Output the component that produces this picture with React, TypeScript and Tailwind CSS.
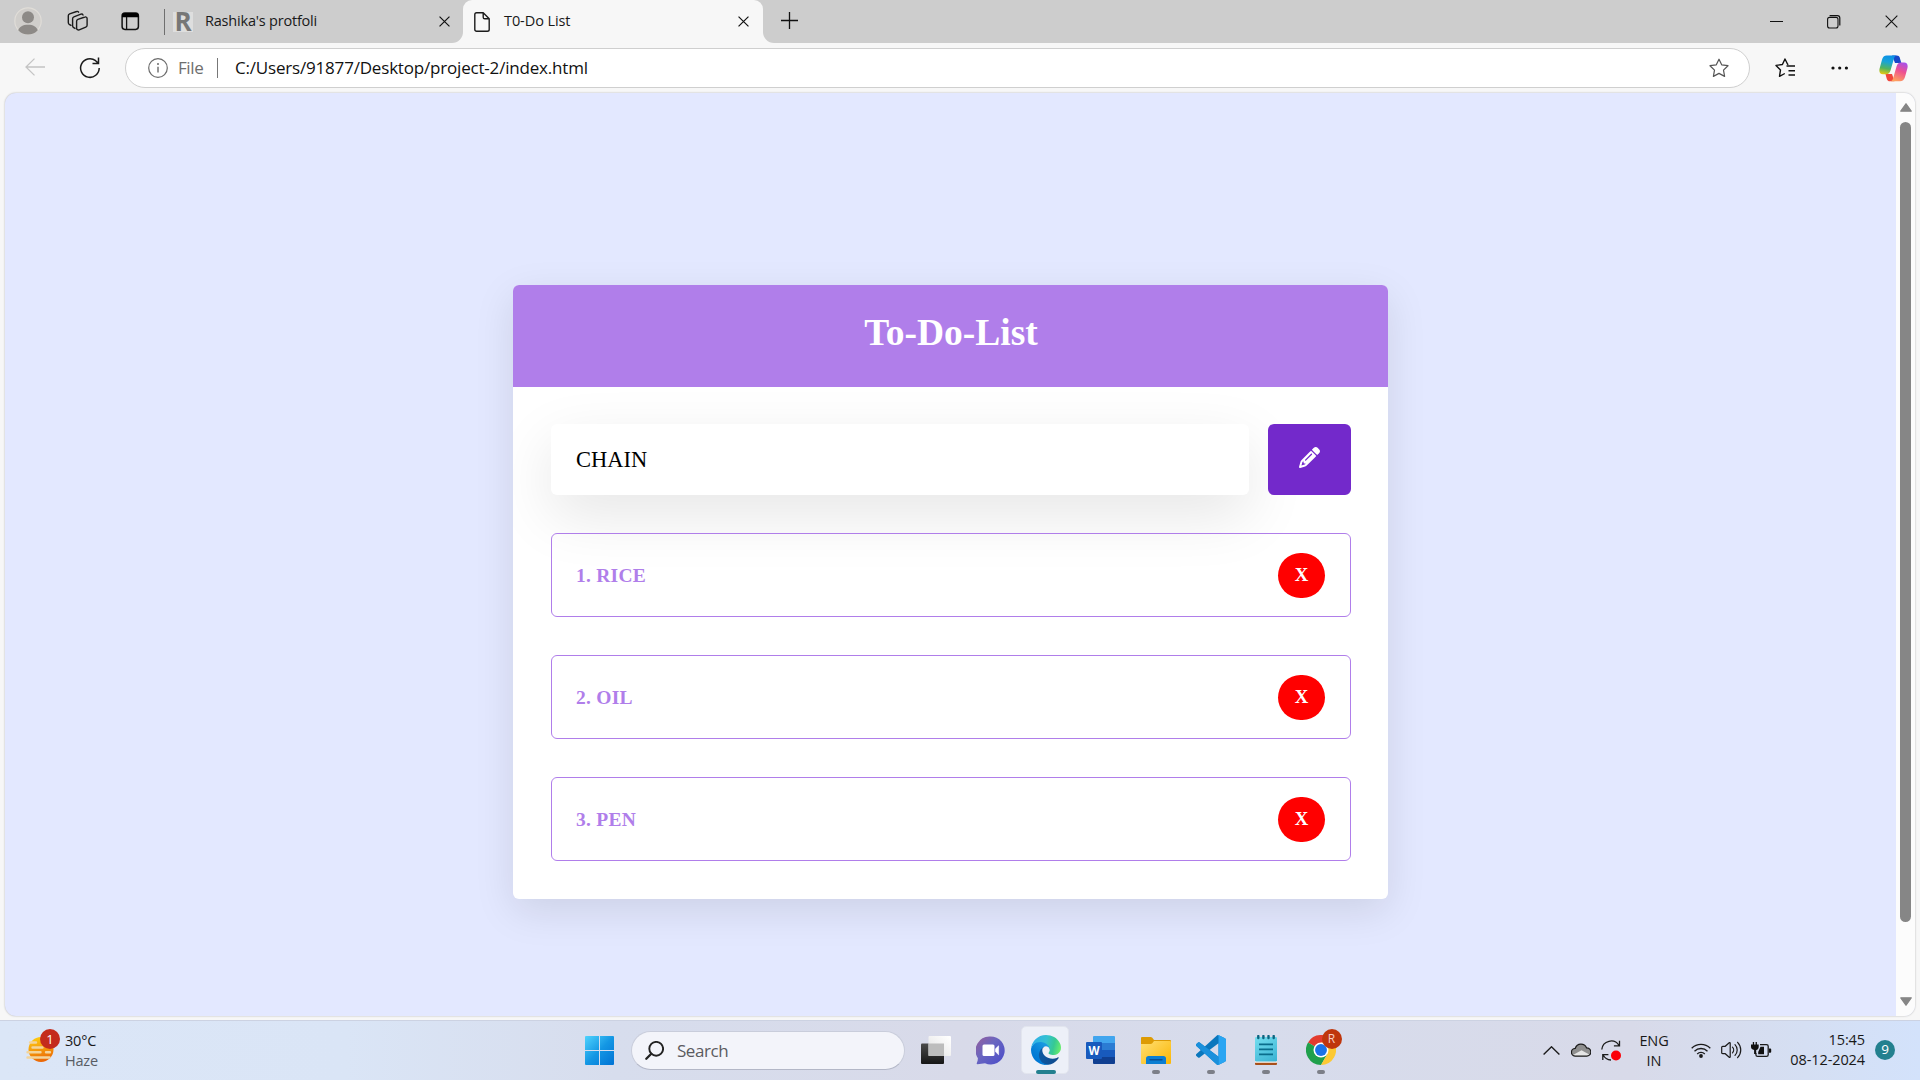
import type { ReactNode } from "react";
import { FaPencil } from "react-icons/fa6";

const UI = "font-['Open_Sans','Noto_Sans',sans-serif]";

function Svg({ w, h, vb, className = "", children }: { w: number; h: number; vb?: string; className?: string; children: ReactNode }) {
  return (
    <svg width={w} height={h} viewBox={vb ?? `0 0 ${w} ${h}`} fill="none" className={`block shrink-0 ${className}`}>
      {children}
    </svg>
  );
}

function Cross({ size, className = "", sw = 1.3 }: { size: number; className?: string; sw?: number }) {
  return (
    <Svg w={size} h={size} vb="0 0 12 12" className={className}>
      <path d="M.6.6 11.4 11.4M11.4.6.6 11.4" stroke="#111" strokeWidth={sw} />
    </Svg>
  );
}

function TabStrip() {
  return (
    <div className="relative flex h-[43px] shrink-0 items-start bg-[#cdcdcd]">
      <Svg w={28} h={28} className="ml-[14px] mt-[7px]">
        <circle cx="14" cy="14" r="13.2" fill="#d0cecb" stroke="#e0ddd8" strokeWidth="1.2" />
        <circle cx="14" cy="10.2" r="6" fill="#8d8a87" />
        <path d="M4.2 23.3c1.2-3.6 4.600-5.600 9.800-5.600s8.600 2 9.800 5.600A13.200 13.200 0 0 1 14 27.600a13.200 13.200 0 0 1-9.800-4.300z" fill="#8d8a87" />
      </Svg>
      <Svg w={22} h={22} className="ml-[25px] mt-[10px]">
        <g stroke="#1b1b1b" strokeWidth="1.4" strokeLinejoin="round" strokeLinecap="round">
          <path d="M9.600 11.200c0-.9.500-1.600 1.300-1.900l7-2.300c1.100-.4 2.200.4 2.200 1.600v6.600c0 .9-.5 1.600-1.300 1.900l-6.600 2.800c-1.200.4-2.600-.4-2.600-1.700z" />
          <path d="M8 18.400 6.700 17.600c-.7-.4-1.100-1-1.100-1.900V8.800c0-.9.500-1.600 1.300-1.900l7-2.700c.8-.3 1.700 0 2.100.8" />
          <path d="M4 15.400 2.200 14.300c-.6-.4-.9-1-.9-1.700V5.800c0-.9.500-1.600 1.300-1.900l7-2.400c.8-.3 1.600 0 2 .7" />
        </g>
      </Svg>
      <Svg w={19} h={19} className="ml-[32px] mt-[12px]">
        <rect x="1.100" y="1.100" width="16.300" height="16.300" rx="2.800" stroke="#111" strokeWidth="1.500" />
        <path d="M1 5.200V3.600A2.800 2.800 0 0 1 3.800 1h11a2.800 2.800 0 0 1 2.800 2.600v1.600z" fill="#000" />
        <path d="M5.600 5v12.500" stroke="#111" strokeWidth="1.300" />
      </Svg>
      <div className="ml-[24px] mt-[9px] h-[26px] w-[1px] bg-[#6f6f6f]" />
      <div className={`ml-[8px] mt-[12px] flex h-5 w-5 items-center justify-center bg-[#dedede] pb-[2px] text-[26px] font-bold leading-none text-[#777] ${UI}`}>R</div>
      <div className={`ml-[12px] mt-[11px] w-[234px] whitespace-nowrap text-[14.500px] leading-5 tracking-[-0.2px] text-[#191919] ${UI}`}>
        Rashika's protfoli
      </div>
      <Cross size={11} className="mt-[16px]" />
      <div className="relative ml-[13px] flex h-[43px] w-[300px] items-start rounded-t-[9px] bg-[#f7f7f7]">
        <Svg w={11} h={11} className="absolute -left-[11px] bottom-0">
          <path d="M11 0A11 11 0 0 1 0 11h11z" fill="#f7f7f7" />
        </Svg>
        <Svg w={11} h={11} className="absolute -right-[11px] bottom-0">
          <path d="M0 0a11 11 0 0 0 11 11H0z" fill="#f7f7f7" />
        </Svg>
        <Svg w={16} h={20} className="ml-[11px] mt-[12px]">
          <path d="M.8 2.600C.8 1.500 1.600.800 2.600.800h6.600l6 6v10.600c0 1-.8 1.800-1.800 1.800H2.600c-1 0-1.800-.8-1.800-1.800zM9.200.800v4.400c0 .9.700 1.600 1.600 1.600h4.400" stroke="#1b1b1b" strokeWidth="1.400" strokeLinejoin="round" />
        </Svg>
        <div className={`ml-[14px] mt-[11px] w-[234px] whitespace-nowrap text-[14.500px] leading-5 tracking-[-0.08px] text-[#191919] ${UI}`}>T0-Do List</div>
        <Cross size={11} className="mt-[16px]" />
      </div>
      <Svg w={18} h={18} className="ml-[18px] mt-[12px]">
        <path d="M8.500 0v17M0 8.500h17" stroke="#111" strokeWidth="1.300" />
      </Svg>
      <div className="ml-auto flex pr-[22px]">
        <Svg w={13} h={13} className="mt-[15px]">
          <path d="M0 6.500h13" stroke="#111" />
        </Svg>
        <Svg w={14} h={14} className="ml-[44px] mt-[15px]">
          <rect x=".6" y="2.400" width="10.400" height="10.600" rx="2" stroke="#111" strokeWidth="1.100" />
          <path d="M2.600.600h7.800c1.500 0 2.400 1 2.400 2.400v7.600" stroke="#111" strokeWidth="1.200" />
        </Svg>
        <Cross size={13} className="ml-[44px] mt-[15px]" sw={1} />
      </div>
    </div>
  );
}

const STAR = "M10 1.200 12.700 6.800 19 7.700 14.500 12.100 15.600 18.400 10 15.400 4.400 18.400 5.500 12.100 1 7.700 7.300 6.800z";

function Copilot() {
  return (
    <Svg w={29} h={27}>
      <defs>
        <linearGradient id="cpa" x1="10" y1="0" x2="6" y2="20" gradientUnits="userSpaceOnUse">
          <stop stopColor="#0a8ee8" /><stop offset=".35" stopColor="#18a4d8" /><stop offset=".68" stopColor="#52b45e" /><stop offset="1" stopColor="#f3cb0c" />
        </linearGradient>
        <linearGradient id="cpb" x1="24" y1="7" x2="16" y2="26" gradientUnits="userSpaceOnUse">
          <stop stopColor="#a550ec" /><stop offset=".45" stopColor="#ee5091" /><stop offset="1" stopColor="#ffa45c" />
        </linearGradient>
      </defs>
      <path d="M13 .5h4.800c1.500 0 2.500.8 3 2.200L22.300 8H16z" fill="#1748c8" />
      <path d="M15.500 26.200H11c-1.600 0-2.700-.9-3.200-2.300L6.500 19H13z" fill="#f0463c" />
      <path d="M7.700.500h9.600c-1.300.6-2 1.700-2.500 3.500l-3.300 11.400c-.7 2.300-2 3.800-4.500 3.800H4C.8 19.200-.2 16.800.6 13.500L3 4.800C3.700 2 5.300.500 7.700.500z" fill="url(#cpa)" />
      <path d="M21 26.200h-9.200c1.300-.6 2-1.700 2.500-3.500l3.300-11.400c.7-2.300 2-3.800 4.500-3.800H25c3.200 0 4.200 2.400 3.400 5.700L26 21.900c-.7 2.800-2.600 4.300-5 4.300z" fill="url(#cpb)" />
      <path d="M15.200 8.300h2.900c-.7.800-1 1.700-1.300 2.800L14.700 17.300c-.4 1.100-1 1.700-1.900 1.800H11c1-.9 1.500-2.200 1.900-3.700z" fill="#f7f7f7" />
    </Svg>
  );
}

function Toolbar() {
  return (
    <div className="flex h-[50px] shrink-0 items-center bg-[#f7f7f7]">
      <Svg w={20} h={18} className="ml-[25px] mt-[-2px]">
        <path d="M20 9H1M9.500.600 1 9l8.500 8.400" stroke="#c4c4c4" strokeWidth="1.300" />
      </Svg>
      <Svg w={22} h={22} className="ml-[34px]">
        <path d="M20.200 11A9.300 9.300 0 1 1 16.600 3.700L19.500 6.400M19.500.600v6h-6" stroke="#1b1b1b" strokeWidth="1.500" />
      </Svg>
      <div className="ml-[24px] flex h-10 w-[1625px] items-center rounded-full border border-[#cfcfcf] bg-white">
        <Svg w={20} h={20} className="ml-[22px]">
          <circle cx="10" cy="10" r="9.300" stroke="#6b6b6b" strokeWidth="1.200" />
          <path d="M10 8.800v5.600" stroke="#6b6b6b" strokeWidth="1.400" />
          <circle cx="10" cy="6" r="1" fill="#6b6b6b" />
        </Svg>
        <span className={`ml-[10px] w-[38px] text-[17px] leading-6 tracking-[-0.4px] text-[#6e6e6e] ${UI}`}>File</span>
        <span className="ml-[1px] h-5 w-[1px] bg-[#777]" />
        <span className={`ml-[17px] whitespace-nowrap text-[17px] leading-6 tracking-[-0.19px] text-[#111] ${UI}`}>C:/Users/91877/Desktop/project-2/index.html</span>
        <Svg w={20} h={20} className="ml-auto mr-[20px]">
          <path d={STAR} stroke="#555" strokeWidth="1.200" strokeLinejoin="round" />
        </Svg>
      </div>
      <Svg w={22} h={20} className="ml-[25px]">
        <path d="M11.500 8h8.500M13.500 12.800h6.500M13.500 17h6.500" stroke="#111" strokeWidth="1.500" />
        <path d="M13.400 6.400 12.600 6.300 10 1 7.400 6.500 1 7.400 5.500 11.900 4.500 18.300 9.800 15.500" stroke="#111" strokeWidth="1.400" strokeLinejoin="round" />
      </Svg>
      <Svg w={18} h={4} className="ml-[34px]">
        <circle cx="2" cy="2" r="1.600" fill="#111" /><circle cx="8.700" cy="2" r="1.600" fill="#111" /><circle cx="15.400" cy="2" r="1.600" fill="#111" />
      </Svg>
      <div className="ml-[30px]"><Copilot /></div>
    </div>
  );
}

function TodoItem({ label }: { label: string }) {
  return (
    <li className="flex h-[84px] items-center justify-between rounded-[6px] border border-[#b07eea] pl-[24px] pr-[25px]">
      <span className="pt-[2px] text-[19.5px] font-bold leading-6 tracking-[0.25px] text-[#b07eea]">{label}</span>
      <button className="h-[45px] w-[47px] rounded-full bg-[#ff0000] text-[18.75px] font-bold leading-none text-white">X</button>
    </li>
  );
}

function TodoCard() {
  return (
    <section className="h-[614px] w-[875px] overflow-hidden rounded-[6px] bg-white font-['Liberation_Serif','Times_New_Roman',serif] shadow-[0_12px_40px_rgba(0,0,0,0.1)]">
      <h1 className="relative h-[102px] bg-[#b07eea] pt-[27px] pl-[1px] text-center text-[37.5px] font-bold leading-[42px] text-white">To-Do-List</h1>
      <div className="pl-[38px] pr-[37px] pt-[37px]">
        <div className="flex gap-[19px]">
          <div className="flex h-[71px] w-[698px] items-center rounded-[6px] bg-white pl-[25px] text-[22.5px] leading-7 text-black shadow-[0_20px_60px_rgba(0,0,0,0.1)]">CHAIN</div>
          <button className="relative flex h-[71px] w-[83px] items-center justify-center rounded-[6px] bg-[#7329cb] pb-[4px] text-white">
            <FaPencil size={21} />
          </button>
        </div>
        <ul className="relative mt-[38px] flex flex-col gap-[38px]">
          {["1. RICE", "2. OIL", "3. PEN"].map((t) => <TodoItem key={t} label={t} />)}
        </ul>
      </div>
    </section>
  );
}

function Page() {
  return (
    <div className="h-[927px] shrink-0 bg-[#f7f7f7] pl-[5px] pr-[5px]">
      <div className="flex h-[923px] overflow-hidden rounded-[11px] bg-[#e3e8ff] shadow-[0_0_2px_rgba(0,0,0,0.3)]">
        <main className="flex flex-1 justify-center pt-[192px]"><TodoCard /></main>
        <div className="flex w-[19px] flex-col items-center bg-[#fcfcfc] pt-[10px]">
          <Svg w={12} h={9}><path d="M6 .8 11.200 8.200H.8z" fill="#868686" stroke="#868686" strokeWidth="1.300" strokeLinejoin="round" /></Svg>
          <div className="mt-[10px] h-[800px] w-[11px] rounded-full bg-[#868686]" />
          <Svg w={12} h={9} className="mt-[75px]"><path d="M6 8.200 11.200.800H.8z" fill="#868686" stroke="#868686" strokeWidth="1.300" strokeLinejoin="round" /></Svg>
        </div>
      </div>
    </div>
  );
}

function Weather() {
  return (
    <div className="relative ml-[26px] mt-[9px] h-[34px] w-[34px]">
      <Svg w={29} h={27} className="mt-[7px]">
        <defs><linearGradient id="sun" x1="12" y1="0" x2="18" y2="26" gradientUnits="userSpaceOnUse"><stop stopColor="#ffcf10" /><stop offset="1" stopColor="#ea6205" /></linearGradient></defs>
        <circle cx="15" cy="13.500" r="12.500" fill="url(#sun)" />
        <path d="M4 6.500h6M6.500 11.500h10M1.500 16.200h13M20 16.200h4M1.500 21.500h22" stroke="#f3d49a" strokeWidth="2.400" strokeLinecap="round" />
      </Svg>
      <span className={`absolute left-[14px] top-0 flex h-5 w-5 items-center justify-center rounded-full bg-[#c42b1c] text-[13px] leading-none text-white ${UI}`}>1</span>
    </div>
  );
}

function Slot({ running = false, active = false, children }: { running?: boolean; active?: boolean; children: ReactNode }) {
  return (
    <div className="relative flex h-[60px] w-[55px] shrink-0 items-center justify-center">
      {active && <span className="absolute left-[3px] top-[6px] h-[48px] w-[48px] rounded-[5px] border border-[#e2e5ee] bg-[#edf0f8]" />}
      <div className="relative">{children}</div>
      {running && <span className="absolute bottom-[6px] h-[4px] w-[8px] rounded-full bg-[#7c7f88]" />}
      {active && <span className="absolute bottom-[6px] h-[4px] w-[20px] rounded-full bg-[#23808f]" />}
    </div>
  );
}

function StartIcon() {
  return (
    <Svg w={29} h={29}>
      <defs><linearGradient id="win" x1="0" y1="0" x2="29" y2="29" gradientUnits="userSpaceOnUse"><stop stopColor="#4fd3fd" /><stop offset=".5" stopColor="#1497e4" /><stop offset="1" stopColor="#0072d4" /></linearGradient></defs>
      <path d="M1 0h13v14H0V1a1 1 0 0 1 1-1zM15 0h13a1 1 0 0 1 1 1v13H15zM0 15h14v14H1a1 1 0 0 1-1-1zM15 15h14v13a1 1 0 0 1-1 1H15z" fill="url(#win)" />
    </Svg>
  );
}

function TaskViewIcon() {
  return (
    <Svg w={30} h={28}>
      <defs>
        <linearGradient id="tva" x1="0" y1="8" x2="0" y2="28" gradientUnits="userSpaceOnUse"><stop stopColor="#494949" /><stop offset="1" stopColor="#161616" /></linearGradient>
        <linearGradient id="tvb" x1="28" y1="0" x2="10" y2="20" gradientUnits="userSpaceOnUse"><stop stopColor="#fff" /><stop offset="1" stopColor="#e4e4e4" /></linearGradient>
      </defs>
      <rect x="0" y="7.500" width="23" height="20.500" rx="1" fill="url(#tva)" />
      <rect x="7.500" y="0" width="22.500" height="20" rx="1" fill="url(#tvb)" />
      <path d="M7.500 7.500H23V20H7.500z" fill="#bdbdbd" />
    </Svg>
  );
}

function ChatIcon() {
  return (
    <Svg w={29} h={29}>
      <defs><linearGradient id="cht" x1="3" y1="3" x2="26" y2="25" gradientUnits="userSpaceOnUse"><stop stopColor="#8c60a4" /><stop offset=".4" stopColor="#6a66c0" /><stop offset="1" stopColor="#4f50c8" /></linearGradient></defs>
      <path d="M14.500.500A14 14 0 1 1 9 27.300C6.500 27.600 4 28 1.500 28.200c-.8 0-1-.6-.7-1.200.7-1.500 1.100-3 1.100-4.800A14 14 0 0 1 14.500.500z" fill="url(#cht)" />
      <rect x="6.500" y="8.500" width="12" height="11.500" rx="1.500" fill="#fff" />
      <path d="M19.500 12.800 22.600 9.800v9L19.500 15.800z" fill="#fff" stroke="#fff" strokeWidth=".6" />
    </Svg>
  );
}

function EdgeIcon() {
  return (
    <Svg w={30} h={30} vb="0 0 256 256">
      <defs>
        <linearGradient id="ea" x1="63" y1="177" x2="241" y2="177" gradientUnits="userSpaceOnUse"><stop stopColor="#0c59a4" /><stop offset="1" stopColor="#114a8b" /></linearGradient>
        <linearGradient id="eb" x1="157" y1="99" x2="46" y2="220" gradientUnits="userSpaceOnUse"><stop stopColor="#1b9de2" /><stop offset=".16" stopColor="#1595df" /><stop offset=".67" stopColor="#0680d7" /><stop offset="1" stopColor="#0078d4" /></linearGradient>
        <linearGradient id="ec" x1="20" y1="60" x2="255" y2="120" gradientUnits="userSpaceOnUse"><stop stopColor="#2fb0e8" /><stop offset=".45" stopColor="#35c1d2" /><stop offset=".75" stopColor="#36c993" /><stop offset="1" stopColor="#66eb6e" /></linearGradient>
      </defs>
      <g transform="translate(-4.630 -4.920)">
        <path fill="url(#ea)" d="M235.680 195.460a93.730 93.730 0 0 1-10.540 4.710 101.870 101.870 0 0 1-35.900 6.460c-47.320 0-88.540-32.550-88.540-74.320A31.480 31.480 0 0 1 117.130 105c-42.800 1.800-53.800 46.400-53.800 72.530 0 73.880 68.090 81.370 82.760 81.370 7.910 0 19.840-2.300 27-4.560l1.310-.44a128.340 128.340 0 0 0 66.600-52.800 4 4 0 0 0-5.320-5.640z" />
        <path fill="url(#eb)" d="M110.340 246.340A79.200 79.200 0 0 1 87.600 225a80.720 80.720 0 0 1 29.530-120c3.120-1.470 8.450-4.130 15.540-4a32.350 32.350 0 0 1 25.690 13 31.880 31.880 0 0 1 6.360 18.660c0-.21 24.460-79.600-80-79.600-43.900 0-80 41.660-80 78.210a130.150 130.150 0 0 0 12.110 56 128 128 0 0 0 156.380 67.110 75.550 75.550 0 0 1-62.780-8z" />
        <path fill="url(#ec)" d="M156.940 153.780c-.81 1.050-3.300 2.500-3.300 5.660 0 2.610 1.700 5.120 4.720 7.230 14.380 10 41.490 8.680 41.560 8.680a59.560 59.560 0 0 0 30.270-8.350 61.380 61.380 0 0 0 30.430-52.880c.26-22.410-8-37.310-11.340-43.910C228.090 28.760 182.350 4.920 132.610 4.920a128 128 0 0 0-128 126.200c.48-36.540 36.800-66.050 80-66.050 3.500 0 23.460.34 42 10.070 16.340 8.580 24.900 18.940 30.850 29.210 6.180 10.670 7.280 24.150 7.280 29.520s-2.740 13.330-7.800 19.910z" />
      </g>
    </Svg>
  );
}

function WordIcon() {
  return (
    <div className="relative">
      <Svg w={29} h={28}>
        <path d="M8 0h20a1 1 0 0 1 1 1v6H7V1a1 1 0 0 1 1-1z" fill="#41a5ee" />
        <path d="M7 7h22v7H7z" fill="#2b7cd3" />
        <path d="M7 14h22v7H7z" fill="#185abd" />
        <path d="M7 21h22v6a1 1 0 0 1-1 1H8a1 1 0 0 1-1-1z" fill="#103f91" />
      </Svg>
      <span className={`absolute left-0 top-[6px] flex h-[17px] w-[16px] items-center justify-center rounded-[1px] bg-[#185abd] text-[11.5px] font-bold leading-none text-white ${UI}`}>W</span>
    </div>
  );
}

function FolderIcon() {
  return (
    <Svg w={30} h={27}>
      <defs><linearGradient id="fld" x1="6" y1="3" x2="26" y2="27" gradientUnits="userSpaceOnUse"><stop stopColor="#ffdc6a" /><stop offset="1" stopColor="#fbb90c" /></linearGradient></defs>
      <path d="M1 0h8.500c.8 0 1.300.3 1.800.8L13 3h16a1 1 0 0 1 1 1v4H0V1a1 1 0 0 1 1-1z" fill="#dd9b04" />
      <path d="M0 7h9.500c.8 0 1.300-.3 1.800-.8L13 4h16a1 1 0 0 1 1 1v21a1 1 0 0 1-1 1H1a1 1 0 0 1-1-1z" fill="url(#fld)" />
      <path d="M5 27v-5.500C5 20 6 19 7.500 19h15c1.500 0 2.500 1 2.500 2.500V27z" fill="#0b7ed2" />
      <path d="M9 22.800h12" stroke="#0a4f94" strokeWidth="1.400" strokeLinecap="round" />
    </Svg>
  );
}

function CodeIcon() {
  return (
    <Svg w={30} h={30} vb="0 0 24 24">
      <path fill="#0a77bd" d="M23.150 2.587L18.210.210a1.494 1.494 0 0 0-1.705.290l-9.460 8.630-4.120-3.128a.999.999 0 0 0-1.276.057L.327 7.261A1 1 0 0 0 .326 8.740L3.899 12 .326 15.260a1 1 0 0 0 .001 1.479L1.650 17.940a.999.999 0 0 0 1.276.057l4.120-3.128 9.460 8.630a1.492 1.492 0 0 0 1.704.290l4.942-2.377A1.500 1.500 0 0 0 24 20.060V3.939a1.500 1.500 0 0 0-.850-1.352zm-5.146 14.861L10.826 12l7.178-5.448v10.896z" />
      <path fill="#1a90dc" d="M.327 7.261 1.649 6.059a1 1 0 0 1 1.276-.057L18 17.450v6.400a1.500 1.500 0 0 1-1.500-.350L.326 8.740a1 1 0 0 1 0-1.479z" />
      <path fill="#2aa5f2" d="M18.210.210 23.150 2.587A1.500 1.500 0 0 1 24 3.939V20.060a1.500 1.500 0 0 1-.848 1.352L18.210 23.789a1.500 1.500 0 0 1-.8.150c.4-.2.600-.5.600-1V1.100c0-.5-.2-.8-.6-1 .3-.1.500 0 .8.110z" />
    </Svg>
  );
}

function NotepadIcon() {
  return (
    <Svg w={22} h={30}>
      <defs><linearGradient id="ntp" x1="3" y1="2" x2="18" y2="27" gradientUnits="userSpaceOnUse"><stop stopColor="#72dcee" /><stop offset="1" stopColor="#3cb4d4" /></linearGradient></defs>
      <path d="M0 26h22v3a1 1 0 0 1-1 1H1a1 1 0 0 1-1-1z" fill="#a8501a" />
      <path d="M0 25h22v2.800H0z" fill="#f5f3f0" />
      <rect y="2" width="22" height="24.500" rx="1.200" fill="url(#ntp)" />
      <path d="M3.300 1v2M8.400 1v2M13.500 1v2M18.700 1v2" stroke="#0c6580" strokeWidth="2.400" strokeLinecap="round" />
      <path d="M4 9.300h14M4 14.300h14M4 19.300h14" stroke="#0a6d8c" strokeWidth="1.800" />
    </Svg>
  );
}

function ChromeIcon() {
  return (
    <div className="relative">
      <Svg w={30} h={30} vb="0 0 48 48">
        <path d="M24 24 3.200 12A24 24 0 0 1 44.800 12z" fill="#e33b2e" />
        <path d="M24 24 3.200 12A24 24 0 0 0 24 48L34.400 30z" fill="#1fa04c" />
        <path d="M24 12H44.800A24 24 0 0 1 24 48L34.400 30z" fill="#fcc934" />
        <circle cx="24" cy="24" r="12" fill="#fff" />
        <circle cx="24" cy="24" r="9.500" fill="#1a73e8" />
      </Svg>
      <span className={`absolute left-[16px] top-[-6px] flex h-5 w-5 items-center justify-center rounded-full bg-[#bf360c] text-[12px] leading-none text-[#f6cfc2] ${UI}`}>R</span>
    </div>
  );
}

function Tray() {
  return (
    <div className="ml-auto flex h-[60px] items-center pr-[25px]">
      <Svg w={17} h={9}><path d="M.6 8.400 8.500.800l7.900 7.600" stroke="#1b1b1b" strokeWidth="1.400" /></Svg>
      <Svg w={20} h={15} className="ml-[11px] mt-[-2px]">
        <path d="M4.500 14.200A3.900 3.900 0 0 1 4.300 6.300 6 6 0 0 1 15.500 5.800 4.200 4.200 0 0 1 15.700 14.200z" fill="#8f8f8f" />
        <path d="M2 13 10.500 8.200 18.300 12.500 15.700 14.200H4.500z" fill="#e6e6e6" />
        <path d="M4.500 14.200A3.900 3.900 0 0 1 4.300 6.300 6 6 0 0 1 15.500 5.800 4.200 4.200 0 0 1 15.700 14.200z" stroke="#1b1b1b" strokeWidth="1.200" />
      </Svg>
      <Svg w={21} h={21} className="ml-[10px]">
        <path d="M.8 9.500A9.300 9.300 0 0 1 18 5.500M18.500.800v5h-5.600M1.800 20v-5.400h5.600M2 14.800A9.300 9.300 0 0 0 10 20" stroke="#1b1b1b" strokeWidth="1.300" />
        <circle cx="15" cy="15.500" r="5" fill="#fb0007" />
      </Svg>
      <div className={`ml-[17px] mt-[2px] w-[30px] text-center text-[14.500px] leading-5 tracking-[-0.1px] text-[#191919] ${UI}`}>ENG<br />IN</div>
      <Svg w={20} h={16} className="ml-[22px]">
        <path d="M.7 6.300a13.200 13.200 0 0 1 18.600 0M3.500 9.200a9.200 9.200 0 0 1 13 0M6.200 12a5.400 5.400 0 0 1 7.600 0" stroke="#1b1b1b" strokeWidth="1.300" />
        <circle cx="10" cy="14" r="1.900" fill="#1b1b1b" />
      </Svg>
      <Svg w={21} h={18} className="ml-[10px]">
        <path d="M.7 6.300c0-.6.400-1 1-1h2.500l4-3.500c.5-.4 1-.2 1 .4v13.600c0 .6-.5.800-1 .4l-4-3.500H1.700c-.6 0-1-.4-1-1zM11.500 6.200a4 4 0 0 1 0 5.600M14 3.700a7.500 7.500 0 0 1 0 10.600M16.600 1.300a11 11 0 0 1 0 15.400" stroke="#1b1b1b" strokeWidth="1.200" strokeLinecap="round" />
      </Svg>
      <Svg w={21} h={16} className="ml-[9px]">
        <path d="M9 2.600h6.500c1 0 1.700.7 1.700 1.700v8.400c0 1-.7 1.700-1.700 1.700H6.600c-1 0-1.700-.7-1.700-1.700V11" stroke="#1b1b1b" strokeWidth="1.300" />
        <path d="M18 6.500h1c.7 0 1.200.4 1.200 1v2.200c0 .6-.5 1-1.200 1h-1zM9.500 4.800H13v7.500H7.200V10z" fill="#111" />
        <path d="M0 2.500h1.800V0h1.300v2.500h1.500V0h1.300v2.500h1.800v2.400c0 1.600-1 2.700-2.500 3V12H3.100V7.900C1.300 7.500 0 6.400 0 4.900z" fill="#111" />
      </Svg>
      <div className={`ml-[9px] flex w-[84px] flex-col items-end whitespace-nowrap text-[14.500px] leading-5 tracking-[-0.1px] text-[#191919] ${UI}`}>
        <span>15:45</span>
        <span>08-12-2024</span>
      </div>
      <span className={`ml-[10px] flex h-5 w-5 items-center justify-center rounded-full bg-[#23808f] text-[13.500px] leading-none text-white ${UI}`}>9</span>
    </div>
  );
}

function Taskbar() {
  return (
    <div className="flex h-[60px] shrink-0 bg-[linear-gradient(90deg,#dbe6f7_0%,#dae5f6_18%,#d7dded_32%,#d8dae9_50%,#d7dcec_65%,#d8dae9_85%,#d5dff3_94%,#d3e2fb_100%)] shadow-[inset_0_1px_0_#ccd2e2]">
      <Weather />
      <div className={`ml-[5px] mt-[11px] w-[507px] text-[14.500px] leading-5 tracking-[-0.2px] text-[#191919] ${UI}`}>
        30°C<br /><span className="text-[#585c64]">Haze</span>
      </div>
      <Slot><StartIcon /></Slot>
      <div className="ml-[4px] mr-[3px] mt-[11px] flex h-[39px] w-[274px] shrink-0 items-center rounded-full border border-[#c9cddb] border-b-[#b3b7c7] bg-[#f3f4fa]">
        <Svg w={19} h={19} className="ml-[13px]">
          <circle cx="11.200" cy="7.800" r="6.900" stroke="#222" strokeWidth="1.900" />
          <path d="M6.300 12.700 1.300 17.700" stroke="#222" strokeWidth="2.300" strokeLinecap="round" />
        </Svg>
        <span className={`ml-[13px] text-[17px] leading-6 tracking-[-0.45px] text-[#5b5b5f] ${UI}`}>Search</span>
      </div>
      <Slot><TaskViewIcon /></Slot>
      <Slot><ChatIcon /></Slot>
      <Slot active><EdgeIcon /></Slot>
      <Slot><WordIcon /></Slot>
      <Slot running><FolderIcon /></Slot>
      <Slot running><CodeIcon /></Slot>
      <Slot running><NotepadIcon /></Slot>
      <Slot running><ChromeIcon /></Slot>
      <Tray />
    </div>
  );
}

export default function App() {
  return (
    <div className="flex h-[1080px] w-[1920px] flex-col overflow-hidden bg-[#f7f7f7]">
      <TabStrip />
      <Toolbar />
      <Page />
      <Taskbar />
    </div>
  );
}
